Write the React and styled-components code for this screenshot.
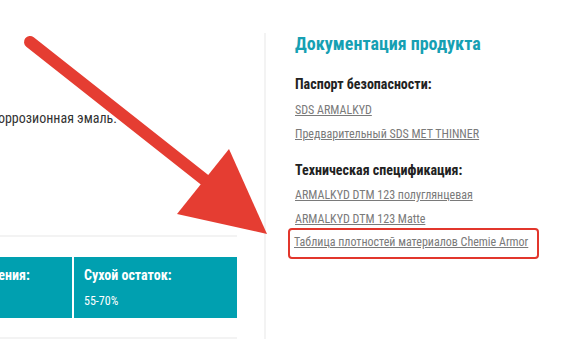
import React from "react";
import styled, { createGlobalStyle } from "styled-components";

const GlobalStyle = createGlobalStyle`
    html, body {
        margin: 0;
        padding: 0;
        background: #ffffff;
    }
    body {
        font-family: "Roboto Condensed", "Roboto", "Liberation Sans", sans-serif;
    }
`

const Page = styled.div`
    position: relative;
    display: flex;
    width: 572px;
    height: 339px;
    overflow: hidden;
    background: #ffffff;
`

const Main = styled.div`
    display: flex;
    flex-direction: column;
    width: 328px;
    margin-left: -91px;
    flex-shrink: 0;
`

const Intro = styled.p`
    display: flex;
    justify-content: flex-end;
    width: 208px;
    margin: 110px 0 0;
    font-size: 14px;
    line-height: 17px;
    color: #333333;
    white-space: nowrap;
`

const Rule = styled.div`
    height: 2px;
    background: #f3f3f3;
    margin-top: ${(p) => p.top}px;
`

const Specs = styled.div`
    display: flex;
    gap: 2px;
    height: 61px;
    margin-top: 20px;
`

const SpecCell = styled.div`
    flex: 1;
    background: #00a0b0;
    color: #ffffff;
    padding: 9px 0 0 10px;
    white-space: nowrap;
`

const SpecTitle = styled.div`
    font-size: 14px;
    font-weight: 700;
    line-height: 18px;
`

const SpecValue = styled.div`
    font-size: 12px;
    line-height: 16px;
    margin-top: 9px;
`

const Sidebar = styled.aside`
    margin: 33px 0 0 27px;
    padding-left: 29px;
    border-left: 2px solid #f3f3f3;
    flex: 1;
`

const Heading = styled.h2`
    margin: 0;
    font-size: 18px;
    line-height: 22px;
    font-weight: 700;
    color: #16a0b3;
`

const Group = styled.div`
    display: flex;
    flex-direction: column;
    margin-top: ${(p) => p.top}px;
`

const GroupTitle = styled.h3`
    margin: 0 0 ${(p) => p.gap || 5}px;
    font-size: 14px;
    line-height: 17px;
    font-weight: 700;
    color: #222222;
`

const DocLink = styled.a`
    display: block;
    font-size: 12px;
    line-height: 24px;
    color: #7a7a7a;
    text-decoration: underline;
    white-space: nowrap;
`

const Highlight = styled.div`
    margin: -3px 0 0 -7px;
    width: 243px;
    padding: 0 0 3px 4px;
    border: 2.5px solid #e2362c;
    border-radius: 4px;
`

const ArrowLayer = styled.svg`
    position: absolute;
    left: 0;
    top: 0;
    pointer-events: none;
`

function Arrow() {
    return (
        <ArrowLayer width="572" height="339" viewBox="0 0 572 339">
            <line x1="30" y1="42" x2="215" y2="188" stroke="#e53d32" strokeWidth="12" strokeLinecap="round" />
            <polygon points="229,149 267,234 177,214" fill="#e53d32" />
        </ArrowLayer>
    );
}

export default function App() {
    return (
        <>
            <GlobalStyle />
            <Page>
                <Main>
                    <Intro>Однокомпонентная алкидная антикоррозионная эмаль.</Intro>
                    <Rule top={108} />
                    <Specs>
                        <SpecCell>
                            <SpecTitle>Способ нанесения:</SpecTitle>
                        </SpecCell>
                        <SpecCell>
                            <SpecTitle>Сухой остаток:</SpecTitle>
                            <SpecValue>55-70%</SpecValue>
                        </SpecCell>
                    </Specs>
                    <Rule top={19} />
                </Main>
                <Sidebar>
                    <Heading>Документация продукта</Heading>
                    <Group top={21}>
                        <GroupTitle>Паспорт безопасности:</GroupTitle>
                        <DocLink href="#">SDS ARMALKYD</DocLink>
                        <DocLink href="#">Предварительный SDS MET THINNER</DocLink>
                    </Group>
                    <Group top={16}>
                        <GroupTitle gap={4}>Техническая спецификация:</GroupTitle>
                        <DocLink href="#">ARMALKYD DTM 123 полуглянцевая</DocLink>
                        <DocLink href="#">ARMALKYD DTM 123 Matte</DocLink>
                        <Highlight>
                            <DocLink href="#">Таблица плотностей материалов Chemie Armor</DocLink>
                        </Highlight>
                    </Group>
                </Sidebar>
                <Arrow />
            </Page>
        </>
    );
}
